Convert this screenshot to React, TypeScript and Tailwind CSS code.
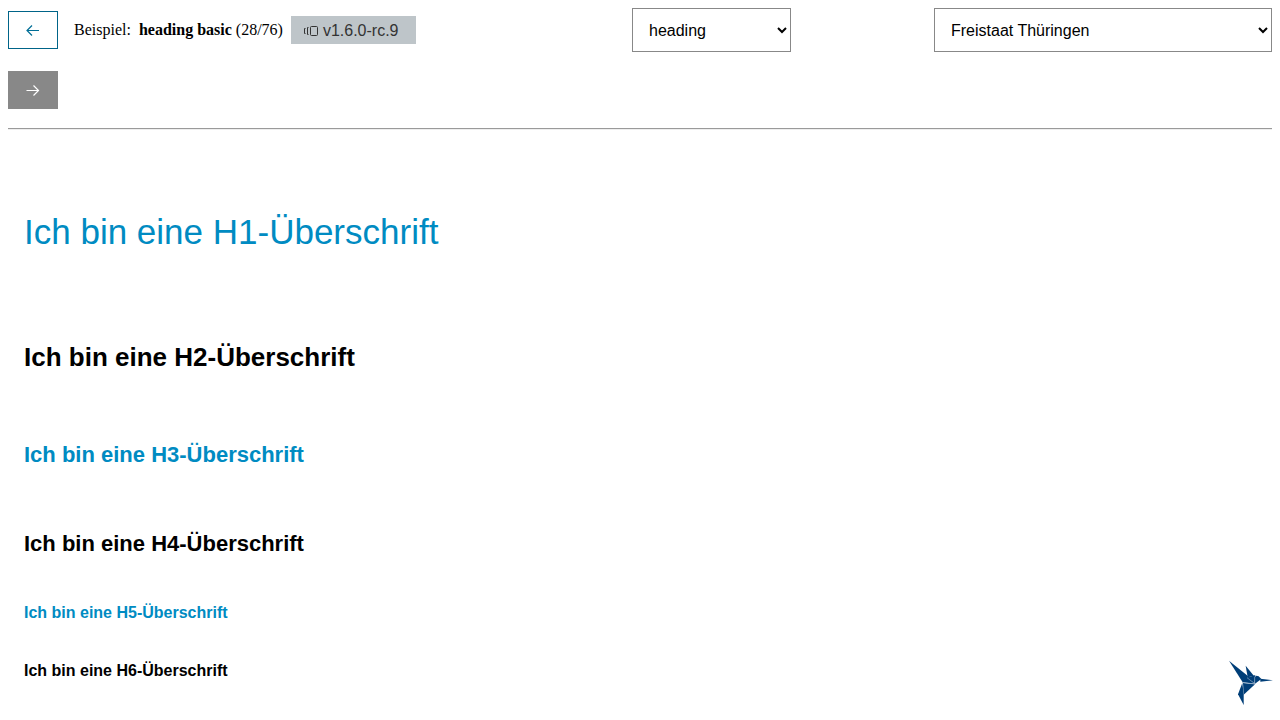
import React, { useState } from "react";

type Heading = {
  tag: "h1" | "h2" | "h3" | "h4" | "h5" | "h6";
  className: string;
};

const headings: Heading[] = [
  { tag: "h1", className: "mt-20 text-[35px] leading-[44px] font-normal text-[#008bc2]" },
  { tag: "h2", className: "mt-[87px] text-[26px] leading-8 font-bold" },
  { tag: "h3", className: "mt-[68px] text-[22px] leading-7 font-bold text-[#008bc2]" },
  { tag: "h4", className: "mt-[61px] text-[22px] leading-7 font-bold" },
  { tag: "h5", className: "mt-[45px] text-base leading-5 font-bold text-[#008bc2]" },
  { tag: "h6", className: "mt-[38px] text-base leading-5 font-bold" },
];

function ArrowIcon({ left = false }: { left?: boolean }) {
  return (
    <svg width="16" height="16" viewBox="0 0 16 16" fill="none" stroke="currentColor" strokeWidth="1.2" aria-hidden="true">
      {left ? <path d="M14 8.5H2M7 3.5 2 8.5 7 13.5" /> : <path d="M1.5 8.5h12M8.5 3.5l5 5-5 5" />}
    </svg>
  );
}

function VersionsIcon() {
  return (
    <svg width="16" height="16" viewBox="0 0 16 16" fill="none" stroke="currentColor" aria-hidden="true">
      <rect x="7.5" y="3.5" width="7" height="9" rx="1" />
      <path d="M5.5 4.5h-1v7h1M2.5 5.5h-1v5h1" />
    </svg>
  );
}

function Hummingbird() {
  return (
    <svg width="60" height="60" viewBox="0 0 180 180" role="img" aria-label="KoliBri">
      <g fill="#003e78">
        <path d="M27 17 80 60 104 86 68 82Z" />
        <path d="M77 32 102 63 83 67Z" />
        <path d="M82 68 106 60 103 85Z" />
        <path d="M104 67 109 62 116 64 124 72 104 87Z" />
        <path d="M121 71 159 76 121 80Z" />
        <path d="M69 84 105 88 71 119Z" />
        <path d="M67 84 71 118 71 150 54 118Z" />
      </g>
      <path
        d="M66 82 104 87M81 68l23 18M104 86V65"
        fill="none"
        stroke="#8fabc5"
        strokeWidth="2"
      />
    </svg>
  );
}

const selectClass =
  "h-11 border border-[#888888] bg-white px-3 font-['Liberation_Sans',Arial,sans-serif] text-base text-black";

export default function App() {
  const [component, setComponent] = useState("heading");
  const [theme, setTheme] = useState("Freistaat Thüringen");

  return (
    <div className="bg-white p-2 text-black">
      <header className="grid grid-cols-[624fr_302fr_338fr] items-start font-['Liberation_Serif','Times_New_Roman',serif] text-base">
        <div className="flex flex-wrap items-center gap-y-4">
          <button
            type="button"
            aria-label="Vorheriges Beispiel"
            className="my-[3px] mr-4 flex h-[38px] w-[50px] items-center justify-center border border-[#006488] text-[#006e96]"
          >
            <ArrowIcon left />
          </button>
          <span>Beispiel:</span>
          <span className="ml-2">
            <strong>heading basic</strong> (28/76)
          </span>
          <span className="ml-2 flex h-7 items-center gap-1 bg-[#bec5c9] pt-px pr-[17px] pl-3 font-['Liberation_Sans',Arial,sans-serif] text-[#333333]">
            <VersionsIcon />
            v1.6.0-rc.9
          </span>
          <div className="basis-full">
            <button
              type="button"
              disabled
              aria-label="Nächstes Beispiel"
              className="my-[3px] flex h-[38px] w-[50px] items-center justify-center bg-[#888888] text-white"
            >
              <ArrowIcon />
            </button>
          </div>
        </div>
        <select
          aria-label="Komponente"
          value={component}
          onChange={(e) => setComponent(e.target.value)}
          className={selectClass + " w-[159px]"}
        >
          <option>heading</option>
        </select>
        <select
          aria-label="Theme"
          value={theme}
          onChange={(e) => setTheme(e.target.value)}
          className={selectClass + " w-full"}
        >
          <option>Freistaat Thüringen</option>
        </select>
      </header>
      <hr className="mt-4 border-t border-b border-t-[#9a9a9a] border-b-[#eeeeee]" />
      <main className="px-4 font-['Liberation_Sans',Arial,sans-serif]">
        {headings.map(({ tag: Tag, className }) => (
          <Tag key={Tag} className={className}>
            Ich bin eine {Tag.toUpperCase()}-Überschrift
          </Tag>
        ))}
      </main>
      <div className="fixed right-0 bottom-[5px]">
        <Hummingbird />
      </div>
    </div>
  );
}
